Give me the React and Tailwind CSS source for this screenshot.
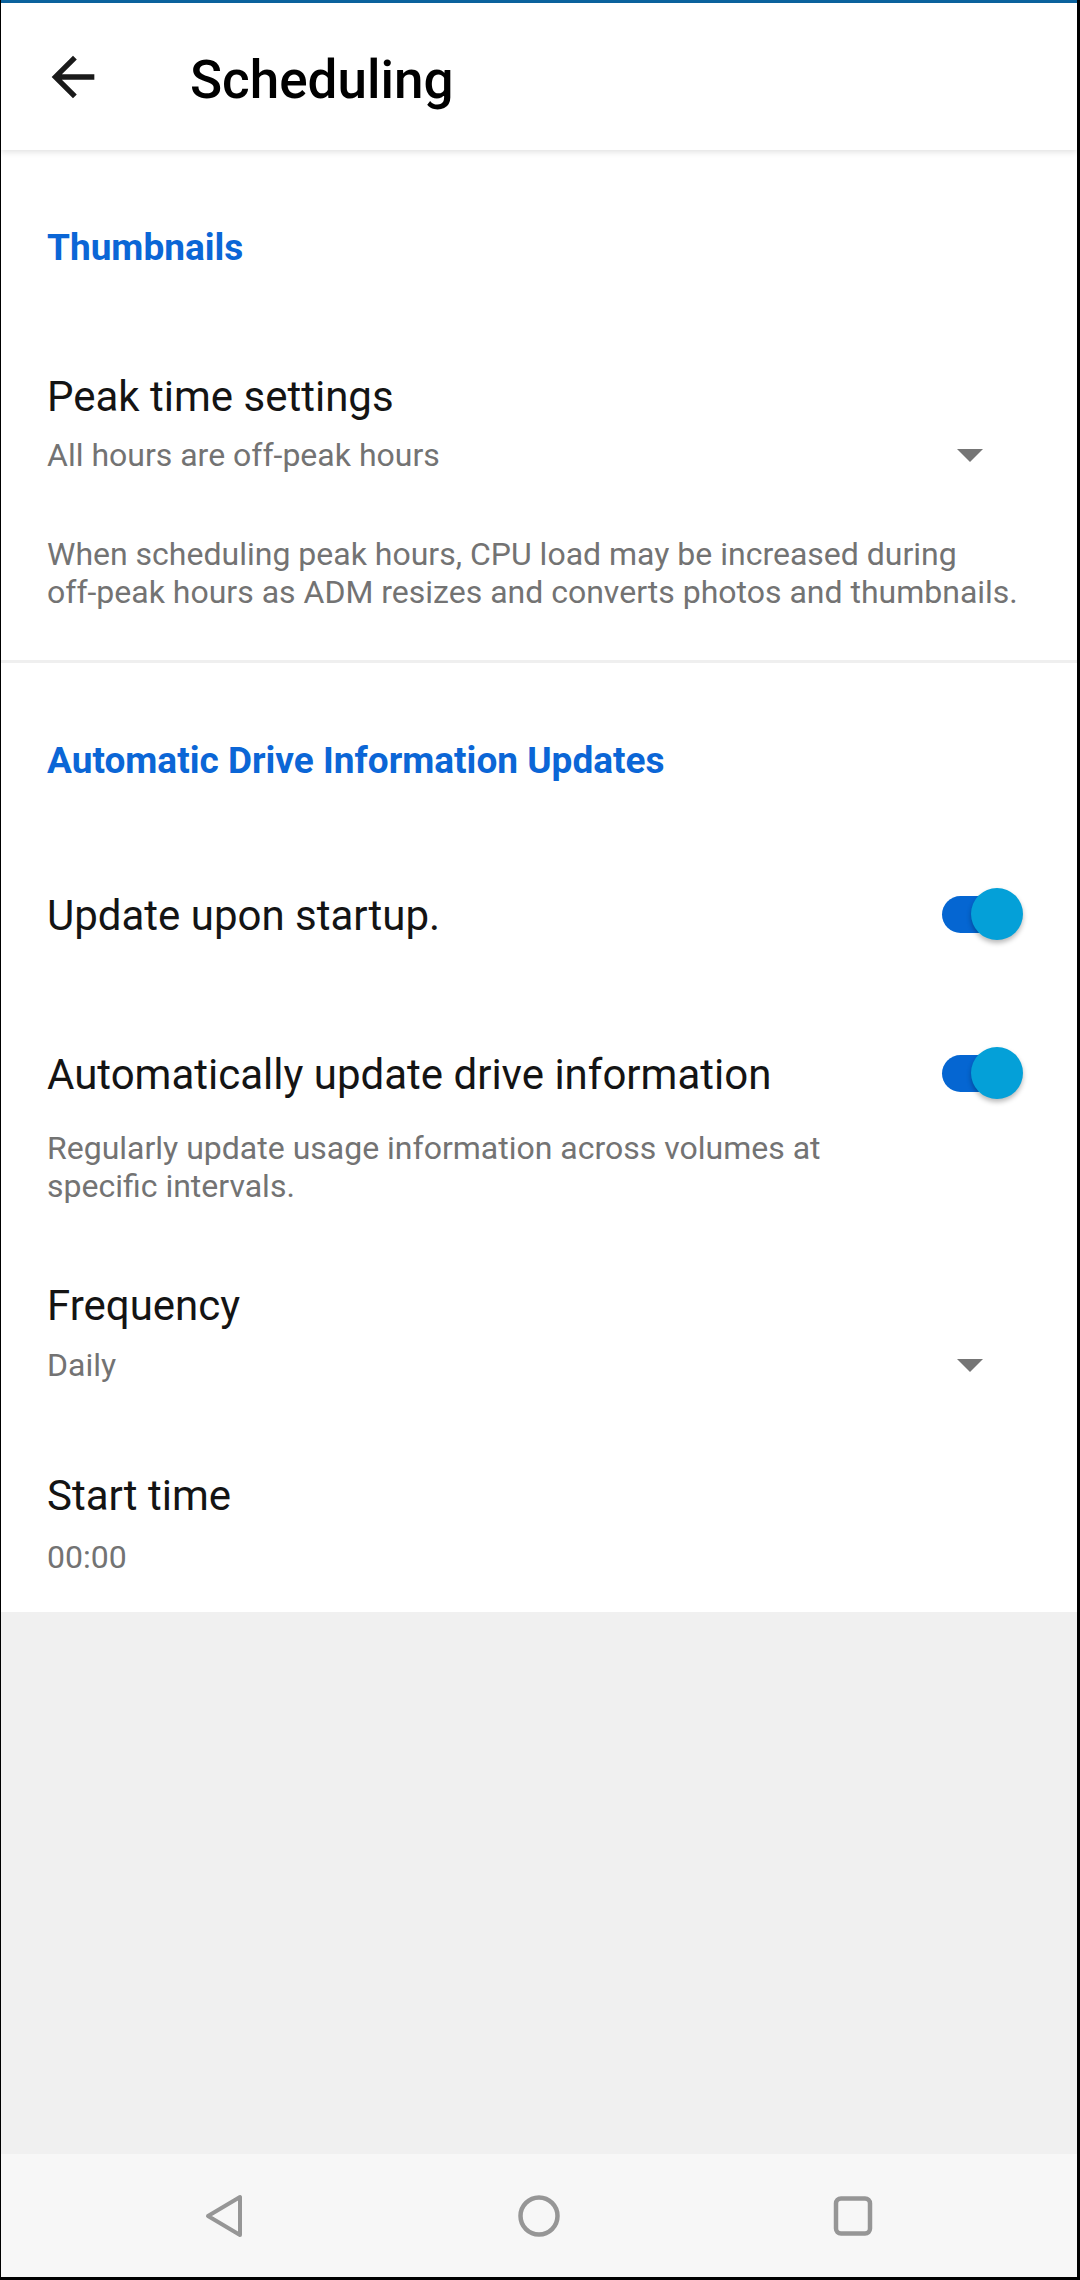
import React from "react";

// Android style switch, always on in this screen
const Toggle = () => (
  <div className="relative w-[81px] h-[52px] shrink-0 mb-[4px]">
    <div className="absolute left-0 top-[8px] w-[70px] h-[37px] rounded-full bg-[#0566d2]" />
    <div className="absolute right-0 top-0 w-[52px] h-[52px] rounded-full bg-[#04a0d8] shadow-[0_3px_5px_rgba(0,0,0,0.28)]" />
  </div>
);

const DropArrow = () => (
  <svg width="26" height="13" viewBox="0 0 26 13" className="shrink-0">
    <polygon points="0,0 26,0 13,13" fill="#757575" />
  </svg>
);

const SectionTitle = ({ children, className = "" }) => (
  <div className={`pl-[46px] text-[37px] leading-[44px] font-bold text-[#0b66d6] ${className}`}>
    {children}
  </div>
);

const ItemTitle = ({ children, className = "" }) => (
  <div className={`text-[42px] leading-[48px] text-[#141414] ${className}`}>{children}</div>
);

const SubText = ({ children, className = "" }) => (
  <div className={`text-[32px] leading-[38px] text-[#737373] ${className}`}>{children}</div>
);

const App = () => {
  return (
    <div className="w-[1080px] h-[2280px] flex flex-col bg-[#f0f0f0] border-l-[1px] border-r-[3px] border-black font-['Roboto','Noto_Sans',sans-serif] overflow-hidden">
      {/* top strip */}
      <div className="h-[3px] bg-[#0c64a0] shrink-0" />

      {/* app bar */}
      <div className="relative z-10 h-[147px] shrink-0 flex items-center bg-white shadow-[0_2px_6px_rgba(0,0,0,0.12)]">
        <svg width="64" height="64" viewBox="0 0 24 24" className="ml-[40px]">
          <path d="M20 11H7.83l5.59-5.59L12 4l-8 8 8 8 1.41-1.41L7.83 13H20v-2z" fill="#1a1a1a" />
        </svg>
        <div className="ml-[85px] mt-[7px] text-[53px] leading-[64px] font-medium text-black">
          Scheduling
        </div>
      </div>

      {/* settings list */}
      <div className="bg-white shrink-0 pt-[76px] pb-[36px]">
        <SectionTitle>Thumbnails</SectionTitle>

        <div className="pl-[46px] pr-[48px] mt-[103px]">
          <ItemTitle>Peak time settings</ItemTitle>
          <div className="mt-[15px] flex items-center justify-between pr-[46px]">
            <SubText>All hours are off-peak hours</SubText>
            <DropArrow />
          </div>
          <SubText className="mt-[61px] text-[32.2px]">
            When scheduling peak hours, CPU load may be increased during
            <br />
            off-peak hours as ADM resizes and converts photos and thumbnails.
          </SubText>
        </div>

        <div className="mt-[49px] h-[3px] bg-[#efefef]" />

        <SectionTitle className="mt-[76px]">Automatic Drive Information Updates</SectionTitle>

        <div className="pl-[46px] pr-[54px]">
          <div className="mt-[105px] flex items-center justify-between">
            <ItemTitle>Update upon startup.</ItemTitle>
            <Toggle />
          </div>

          <div className="mt-[103px] flex items-center justify-between">
            <ItemTitle>Automatically update drive information</ItemTitle>
            <Toggle />
          </div>
          <SubText className="mt-[26px] mr-[136px]">
            Regularly update usage information across volumes at specific intervals.
          </SubText>
        </div>

        <div className="pl-[46px] pr-[48px]">
          <ItemTitle className="mt-[77px]">Frequency</ItemTitle>
          <div className="mt-[16px] flex items-center justify-between pr-[46px]">
            <SubText>Daily</SubText>
            <DropArrow />
          </div>

          <ItemTitle className="mt-[88px]">Start time</ItemTitle>
          <SubText className="mt-[18px]">00:00</SubText>
        </div>
      </div>

      <div className="flex-1" />

      {/* system navigation bar */}
      <div className="h-[123px] shrink-0 bg-[#f7f7f7] flex items-center justify-center gap-[272px]">
        <svg width="40" height="44" viewBox="0 0 40 44">
          <polygon
            points="3,22 35,3 35,41"
            fill="none"
            stroke="#969696"
            strokeWidth="4"
            strokeLinejoin="round"
          />
        </svg>
        <svg width="44" height="44" viewBox="0 0 44 44">
          <circle cx="22" cy="22" r="18.5" fill="none" stroke="#969696" strokeWidth="4.5" />
        </svg>
        <svg width="40" height="40" viewBox="0 0 40 40">
          <rect x="3" y="2.5" width="34" height="35" rx="5" fill="none" stroke="#969696" strokeWidth="4.5" />
        </svg>
      </div>
      <div className="h-[3px] bg-black shrink-0" />
    </div>
  );
};

export default App;
